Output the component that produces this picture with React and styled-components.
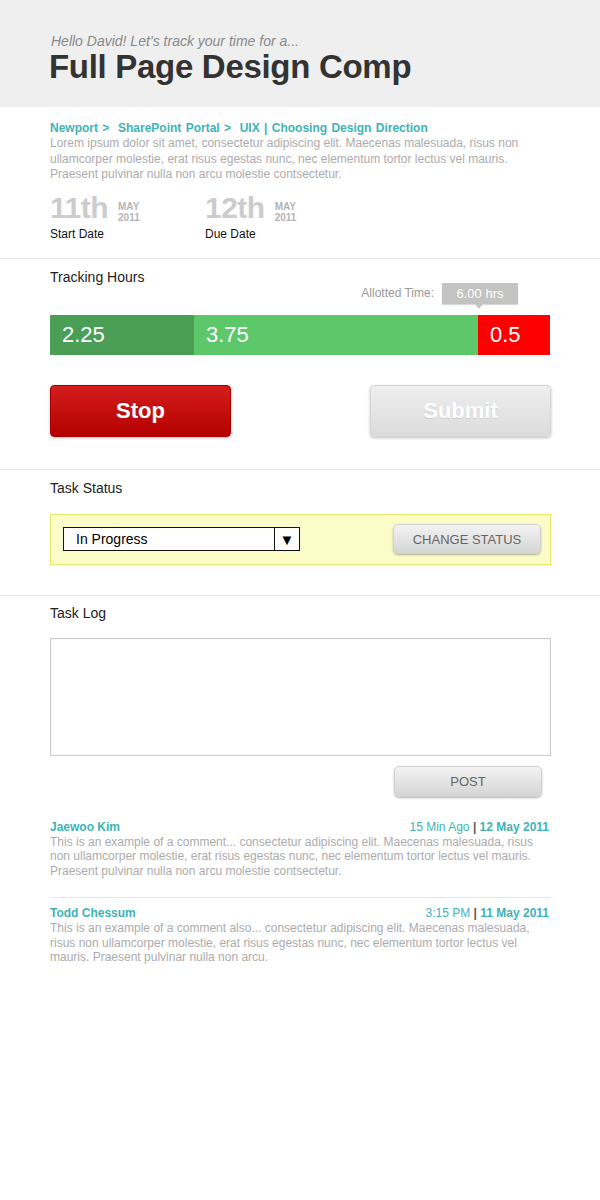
import styled, { createGlobalStyle } from "styled-components";

const GlobalStyle = createGlobalStyle`
  body {
    margin: 0;
    background: #ffffff;
    font-family: "Liberation Sans", Arial, sans-serif;
  }
`;

const teal = "#3db3b6";

const Page = styled.div`
  width: 600px;
  min-height: 1200px;
  background: #ffffff;
`;

const Header = styled.header`
  box-sizing: border-box;
  height: 107px;
  padding: 33px 49px 0;
  background: #efefef;
`;

const Greeting = styled.div`
  font-size: 14px;
  line-height: 16px;
  font-style: italic;
  color: #8a8a8a;
  padding-left: 2px;
`;

const Title = styled.h1`
  margin: 0;
  font-size: 33px;
  line-height: 36px;
  font-weight: bold;
  color: #333333;
  letter-spacing: -0.3px;
`;

const Section = styled.section`
  padding: ${(props) => props.pad || "12px 50px 30px"};
  border-bottom: ${(props) => (props.last ? "none" : "1px solid #e6e6e6")};
`;

const Breadcrumb = styled.div`
  font-size: 12px;
  line-height: 16px;
  font-weight: bold;
  color: ${teal};
  word-spacing: 1px;
`;

const Lorem = styled.p`
  margin: 0;
  font-size: 12px;
  line-height: 15.5px;
  color: #ababab;
`;

const DateRow = styled.div`
  display: flex;
  margin-top: 10px;
`;

const DateBlock = styled.div`
  width: 155px;
`;

const DateTop = styled.div`
  display: flex;
  align-items: flex-start;
  gap: 10px;
`;

const DateNum = styled.span`
  font-size: 30px;
  line-height: 30px;
  font-weight: bold;
  color: #cccccc;
  letter-spacing: -0.5px;
`;

const MonthYear = styled.span`
  display: flex;
  flex-direction: column;
  font-size: 10px;
  line-height: 11px;
  font-weight: bold;
  color: #b4b4b4;
  padding-top: 8px;
`;

const DateLabel = styled.div`
  font-size: 12px;
  line-height: 14px;
  color: #111111;
  margin-top: 4px;
`;

const Label = styled.h2`
  margin: 0;
  font-size: 14px;
  line-height: 16px;
  font-weight: normal;
  color: #222222;
`;

const AllottedRow = styled.div`
  display: flex;
  justify-content: flex-end;
  align-items: center;
  gap: 8px;
  margin-top: -2px;
  padding-right: 33px;
  font-size: 12px;
  color: #999999;
`;

const Tooltip = styled.div`
  position: relative;
  width: 76px;
  height: 21px;
  line-height: 21px;
  text-align: center;
  background: #c3c3c3;
  color: #ffffff;
  font-size: 13px;
  box-shadow: 0 1px 1px rgba(0, 0, 0, 0.15);

  &::after {
    content: "";
    position: absolute;
    left: 33px;
    top: 21px;
    border-left: 4px solid transparent;
    border-right: 4px solid transparent;
    border-top: 5px solid #c3c3c3;
  }
`;

const Bar = styled.div`
  display: flex;
  height: 40px;
  margin-top: 11px;
`;

const Segment = styled.div`
  width: ${(props) => props.w}px;
  background: ${(props) => props.color};
  color: #ffffff;
  font-size: 22px;
  line-height: 40px;
  padding-left: 12px;
  box-sizing: border-box;
`;

const ButtonRow = styled.div`
  display: flex;
  justify-content: space-between;
  margin-top: 30px;
`;

const BigButton = styled.button`
  width: 181px;
  height: 52px;
  border-radius: 4px;
  font-family: "Liberation Sans", Arial, sans-serif;
  font-size: 22px;
  font-weight: bold;
  color: #ffffff;
  cursor: pointer;
  border: 1px solid ${(props) => (props.primary ? "#a80000" : "#d6d6d6")};
  background: ${(props) =>
    props.primary
      ? "linear-gradient(#d41e1e, #b50000)"
      : "linear-gradient(#eeeeee, #dcdcdc)"};
  box-shadow: 0 1px 3px rgba(0, 0, 0, 0.25);
  text-shadow: ${(props) =>
    props.primary ? "0 -1px 0 rgba(0,0,0,0.2)" : "0 1px 1px rgba(0,0,0,0.1)"};
`;

const StatusBox = styled.div`
  display: flex;
  align-items: center;
  justify-content: space-between;
  height: 51px;
  box-sizing: border-box;
  margin-top: 18px;
  padding: 0 9px 0 12px;
  background: #fcfcc8;
  border: 1px solid #e8e86a;
`;

const Select = styled.div`
  display: flex;
  width: 237px;
  height: 24px;
  box-sizing: border-box;
  border: 1px solid #111111;
  background: #ffffff;
`;

const SelectValue = styled.div`
  flex: 1;
  padding-left: 12px;
  font-size: 14px;
  line-height: 22px;
  color: #000000;
`;

const SelectArrow = styled.div`
  width: 24px;
  border-left: 1px solid #111111;
  display: flex;
  align-items: center;
  justify-content: center;
  font-size: 15px;
  line-height: 1;
  color: #000000;
`;

const GreyButton = styled.button`
  width: 148px;
  height: ${(props) => props.h || 30}px;
  border: 1px solid #d0d0d0;
  border-radius: 5px;
  background: linear-gradient(#f3f3f3, #d5d5d5);
  box-shadow: 0 1px 2px rgba(0, 0, 0, 0.3);
  font-family: "Liberation Sans", Arial, sans-serif;
  font-size: 13px;
  color: #666666;
  cursor: pointer;
`;

const LogBox = styled.textarea`
  display: block;
  width: 501px;
  height: 118px;
  margin-top: 17px;
  box-sizing: border-box;
  border: 1px solid #cccccc;
  box-shadow: inset 0 0 3px rgba(0, 0, 0, 0.08);
  resize: none;
  font-family: "Liberation Sans", Arial, sans-serif;
`;

const PostRow = styled.div`
  display: flex;
  justify-content: flex-end;
  padding-right: 9px;
  margin-top: 10px;
`;

const CommentList = styled.div`
  margin-top: 22px;
`;

const Comment = styled.div`
  padding: ${(props) => (props.first ? "0" : "7px")} 0 19px;
  border-bottom: ${(props) => (props.first ? "1px solid #e8e8e8" : "none")};
`;

const CommentHead = styled.div`
  display: flex;
  justify-content: space-between;
  font-size: 12px;
  line-height: 16px;
  color: ${teal};
  padding-right: 2px;
`;

const Name = styled.span`
  font-weight: bold;
`;

const Stamp = styled.span`
  b {
    font-weight: bold;
  }
  i {
    font-style: normal;
    font-weight: bold;
    color: #555555;
  }
`;

const CommentText = styled.p`
  margin: 0;
  font-size: 12px;
  line-height: 14.5px;
  color: #ababab;
`;

const comments = [
  {
    name: "Jaewoo Kim",
    ago: "15 Min Ago",
    date: "12 May 2011",
    text:
      "This is an example of a comment... consectetur adipiscing elit. Maecenas malesuada, risus non ullamcorper molestie, erat risus egestas nunc, nec elementum tortor lectus vel mauris. Praesent pulvinar nulla non arcu molestie contsectetur.",
  },
  {
    name: "Todd Chessum",
    ago: "3:15 PM",
    date: "11 May 2011",
    text:
      "This is an example of a comment also... consectetur adipiscing elit. Maecenas malesuada, risus non ullamcorper molestie, erat risus egestas nunc, nec elementum tortor lectus vel mauris. Praesent pulvinar nulla non arcu.",
  },
];

const App = () => {
  return (
    <Page>
      <GlobalStyle />
      <Header>
        <Greeting>Hello David! Let’s track your time for a...</Greeting>
        <Title>Full Page Design Comp</Title>
      </Header>

      <Section pad="13px 50px 17px">
        <Breadcrumb>
          Newport &gt;&nbsp; SharePoint Portal &gt;&nbsp; UIX | Choosing Design
          Direction
        </Breadcrumb>
        <Lorem>
          Lorem ipsum dolor sit amet, consectetur adipiscing elit. Maecenas
          malesuada, risus non ullamcorper molestie, erat risus egestas nunc,
          nec elementum tortor lectus vel mauris. Praesent pulvinar nulla non
          arcu molestie contsectetur.
        </Lorem>
        <DateRow>
          <DateBlock>
            <DateTop>
              <DateNum>11th</DateNum>
              <MonthYear>
                <span>MAY</span>
                <span>2011</span>
              </MonthYear>
            </DateTop>
            <DateLabel>Start Date</DateLabel>
          </DateBlock>
          <DateBlock>
            <DateTop>
              <DateNum>12th</DateNum>
              <MonthYear>
                <span>MAY</span>
                <span>2011</span>
              </MonthYear>
            </DateTop>
            <DateLabel>Due Date</DateLabel>
          </DateBlock>
        </DateRow>
      </Section>

      <Section pad="10px 49px 32px 50px">
        <Label>Tracking Hours</Label>
        <AllottedRow>
          <span>Allotted Time:</span>
          <Tooltip>6.00 hrs</Tooltip>
        </AllottedRow>
        <Bar>
          <Segment w={144} color="#4b9e56">
            2.25
          </Segment>
          <Segment w={284} color="#5cc86a">
            3.75
          </Segment>
          <Segment w={72} color="#ff0000">
            0.5
          </Segment>
        </Bar>
        <ButtonRow>
          <BigButton primary>Stop</BigButton>
          <BigButton>Submit</BigButton>
        </ButtonRow>
      </Section>

      <Section pad="10px 49px 30px 50px">
        <Label>Task Status</Label>
        <StatusBox>
          <Select>
            <SelectValue>In Progress</SelectValue>
            <SelectArrow>▼</SelectArrow>
          </Select>
          <GreyButton>CHANGE STATUS</GreyButton>
        </StatusBox>
      </Section>

      <Section pad="9px 49px 0 50px" last>
        <Label>Task Log</Label>
        <LogBox />
        <PostRow>
          <GreyButton h={31}>POST</GreyButton>
        </PostRow>
        <CommentList>
          {comments.map((c, i) => (
            <Comment key={c.name} first={i === 0}>
              <CommentHead>
                <Name>{c.name}</Name>
                <Stamp>
                  {c.ago} <i>|</i> <b>{c.date}</b>
                </Stamp>
              </CommentHead>
              <CommentText>{c.text}</CommentText>
            </Comment>
          ))}
        </CommentList>
      </Section>
    </Page>
  );
};

export default App;
